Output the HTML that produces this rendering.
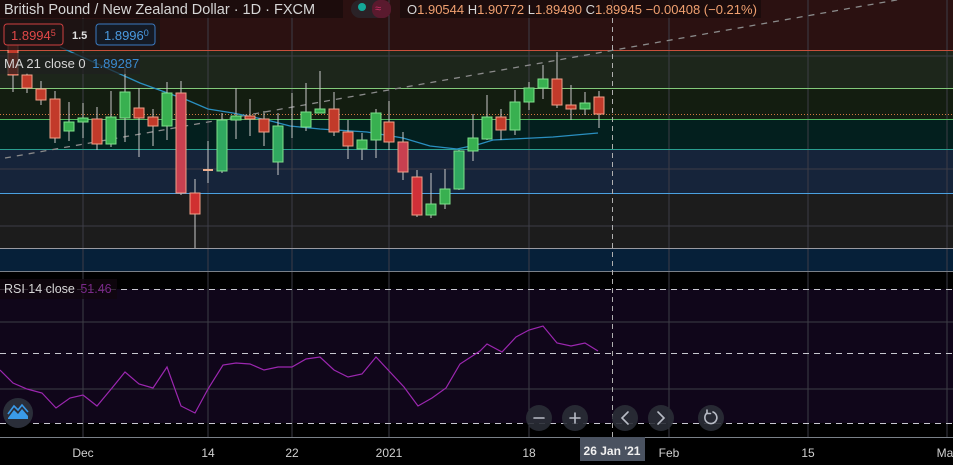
<!DOCTYPE html>
<html><head><meta charset="utf-8"><style>
html,body{margin:0;padding:0;background:#000;overflow:hidden}
svg{display:block}
text{font-family:"Liberation Sans",sans-serif}
</style></head><body>
<svg width="953" height="465" viewBox="0 0 953 465" xmlns="http://www.w3.org/2000/svg">
<!-- bands -->
<rect x="0" y="0" width="953" height="50" fill="#2b1111"/>
<rect x="0" y="50" width="953" height="38" fill="#1d261b"/>
<rect x="0" y="88" width="953" height="31" fill="#131d10"/>
<rect x="0" y="119" width="953" height="30" fill="#031f1e"/>
<rect x="0" y="149" width="953" height="44" fill="#16243a"/>
<rect x="0" y="193" width="953" height="55" fill="#1c1c1c"/>
<rect x="0" y="248" width="953" height="23" fill="#062039"/>
<rect x="0" y="271" width="953" height="166" fill="#000"/>
<rect x="0" y="289" width="953" height="134" fill="#10061a"/>
<rect x="0" y="437" width="953" height="28" fill="#000"/>
<!-- grid -->
<g stroke="#3d3d46" stroke-width="1">
<line x1="83" y1="0" x2="83" y2="437"/><line x1="208" y1="0" x2="208" y2="437"/><line x1="292" y1="0" x2="292" y2="437"/><line x1="389" y1="0" x2="389" y2="437"/><line x1="529" y1="0" x2="529" y2="437"/><line x1="669" y1="0" x2="669" y2="437"/><line x1="808" y1="0" x2="808" y2="437"/><line x1="947" y1="0" x2="947" y2="437"/>
<line x1="0" y1="56" x2="953" y2="56"/><line x1="0" y1="169" x2="953" y2="169"/><line x1="0" y1="226" x2="953" y2="226"/>
<line x1="0" y1="322" x2="953" y2="322"/><line x1="0" y1="389" x2="953" y2="389"/>
</g>
<line x1="0" y1="50.5" x2="953" y2="50.5" stroke="#c8503c"/>
<line x1="0" y1="88.5" x2="953" y2="88.5" stroke="#82c97a"/>
<line x1="0" y1="119.5" x2="953" y2="119.5" stroke="#4fb860"/>
<line x1="0" y1="149.5" x2="953" y2="149.5" stroke="#2a9d8f"/>
<line x1="0" y1="193.5" x2="953" y2="193.5" stroke="#4aa0e0"/>
<line x1="0" y1="248.5" x2="953" y2="248.5" stroke="#9a9aa0"/>
<line x1="0" y1="271.5" x2="953" y2="271.5" stroke="#7a8088"/>
<line x1="0" y1="437.5" x2="953" y2="437.5" stroke="#7a8088"/>
<line x1="0" y1="114.5" x2="953" y2="114.5" stroke="#d07a40" stroke-dasharray="1,2"/>
<g stroke="#c8c8d0" stroke-dasharray="6,5">
<line x1="0" y1="289.5" x2="953" y2="289.5"/><line x1="0" y1="353.5" x2="953" y2="353.5"/><line x1="0" y1="423.5" x2="953" y2="423.5"/>
</g>
<!-- trend -->
<line x1="5" y1="158" x2="953" y2="-10" stroke="#8a8a8a" stroke-width="1.3" stroke-dasharray="6,6"/>
<!-- crosshair -->
<line x1="612.5" y1="0" x2="612.5" y2="437" stroke="#b0b0b0" stroke-dasharray="5,4"/>
<!-- MA -->
<polyline fill="none" stroke="#2a8fc0" stroke-width="1.3" points="60,47 140,83 187,100 208,109 233,113 267,120 290,126 320,129 367,132 403,138 430,146 457,149 480,144 493,140 553,137 598,133"/>
<!-- candles -->
<g stroke="#c8c8c8" stroke-width="1">
<line x1="13" y1="42" x2="13" y2="92"/><line x1="27" y1="73" x2="27" y2="93"/><line x1="41" y1="81" x2="41" y2="105"/><line x1="55" y1="91" x2="55" y2="143"/><line x1="69" y1="102" x2="69" y2="141"/><line x1="83" y1="103" x2="83" y2="138"/><line x1="97" y1="107" x2="97" y2="150"/><line x1="111" y1="91" x2="111" y2="147"/><line x1="125" y1="68" x2="125" y2="142"/><line x1="139" y1="88" x2="139" y2="157"/><line x1="153" y1="109" x2="153" y2="146"/><line x1="167" y1="82" x2="167" y2="140"/><line x1="181" y1="81" x2="181" y2="195"/><line x1="195" y1="179" x2="195" y2="248"/><line x1="208" y1="141" x2="208" y2="183"/><line x1="222" y1="113" x2="222" y2="173"/><line x1="236" y1="88" x2="236" y2="139"/><line x1="250" y1="99" x2="250" y2="136"/><line x1="264" y1="111" x2="264" y2="146"/><line x1="278" y1="113" x2="278" y2="175"/><line x1="292" y1="93" x2="292" y2="138"/><line x1="306" y1="83" x2="306" y2="131"/><line x1="320" y1="71" x2="320" y2="113"/><line x1="334" y1="92" x2="334" y2="136"/><line x1="348" y1="120" x2="348" y2="159"/><line x1="362" y1="133" x2="362" y2="160"/><line x1="376" y1="109" x2="376" y2="158"/><line x1="389" y1="101" x2="389" y2="150"/><line x1="403" y1="132" x2="403" y2="180"/><line x1="417" y1="170" x2="417" y2="217"/><line x1="431" y1="173" x2="431" y2="218"/><line x1="445" y1="169" x2="445" y2="209"/><line x1="459" y1="150" x2="459" y2="190"/><line x1="473" y1="114" x2="473" y2="161"/><line x1="487" y1="95" x2="487" y2="140"/><line x1="501" y1="109" x2="501" y2="140"/><line x1="515" y1="90" x2="515" y2="135"/><line x1="529" y1="82" x2="529" y2="110"/><line x1="543" y1="65" x2="543" y2="99"/><line x1="557" y1="52" x2="557" y2="108"/><line x1="571" y1="85" x2="571" y2="120"/><line x1="585" y1="92" x2="585" y2="115"/><line x1="599" y1="91" x2="599" y2="128"/>
</g>
<g fill="#c23a2a" stroke="#f0a088" stroke-width="1">
<rect x="8" y="45" width="10" height="30"/><rect x="22" y="75" width="10" height="13"/><rect x="36" y="89" width="10" height="11"/><rect x="50" y="99" width="10" height="39"/><rect x="92" y="119" width="10" height="25"/><rect x="134" y="108" width="10" height="10"/><rect x="148" y="117" width="10" height="9"/><rect x="176" y="93" width="10" height="100" fill="#c84050"/><rect x="190" y="193" width="10" height="21" fill="#d03030"/><rect x="245" y="116" width="10" height="3"/><rect x="259" y="119" width="10" height="13"/><rect x="329" y="109" width="10" height="23"/><rect x="343" y="132" width="10" height="14"/><rect x="384" y="122" width="10" height="20"/><rect x="398" y="142" width="10" height="30" fill="#c84050"/><rect x="412" y="177" width="10" height="38" fill="#d03038"/><rect x="496" y="117" width="10" height="13"/><rect x="552" y="79" width="10" height="26"/><rect x="566" y="105" width="10" height="4"/><rect x="594" y="97" width="10" height="17"/>
</g>
<g fill="#38b050" stroke="#7ee08a" stroke-width="1">
<rect x="64" y="122" width="10" height="9"/><rect x="78" y="118" width="10" height="4"/><rect x="106" y="117" width="10" height="27"/><rect x="120" y="92" width="10" height="26"/><rect x="162" y="93" width="10" height="33"/><rect x="217" y="120" width="10" height="51" fill="#30a860"/><rect x="231" y="116" width="10" height="4"/><rect x="273" y="126" width="10" height="36" fill="#30a860"/><rect x="301" y="112" width="10" height="15"/><rect x="315" y="109" width="10" height="4"/><rect x="357" y="140" width="10" height="9"/><rect x="371" y="113" width="10" height="27"/><rect x="426" y="204" width="10" height="11"/><rect x="440" y="189" width="10" height="15"/><rect x="454" y="151" width="10" height="38" fill="#30a860"/><rect x="468" y="138" width="10" height="13"/><rect x="482" y="117" width="10" height="22"/><rect x="510" y="102" width="10" height="28"/><rect x="524" y="88" width="10" height="14"/><rect x="538" y="79" width="10" height="9"/><rect x="580" y="103" width="10" height="6"/>
</g>
<line x1="203" y1="170" x2="213" y2="170" stroke="#f0b090" stroke-width="2"/>
<!-- RSI -->
<polyline fill="none" stroke="#9c27b0" stroke-width="1.2" points="0,370 13,383 27,389 42,393 56,408 70,398 83,395 97,406 112,388 125,372 139,384 153,388 167,367 181,406 195,413 208,389 223,365 236,363 250,364 264,370 278,367 292,367 306,359 320,357 334,370 348,377 362,374 376,357 390,372 404,387 418,406 432,398 446,388 460,364 480,351 487,344 502,352 516,337 529,330 543,326 557,343 571,346 585,343 598,351"/>
<!-- header -->
<rect x="0" y="0" width="343" height="18" fill="#1a0c0c" opacity="0.85"/>
<text x="4" y="14" font-size="14.5" fill="#d6d6d6">British Pound / New Zealand Dollar · 1D · FXCM</text>
<rect x="351" y="0" width="40" height="18" rx="9" fill="#2a2227"/>
<rect x="372" y="0" width="19" height="18" rx="8" fill="#5a1a2e"/>
<circle cx="362" cy="7" r="4" fill="#14a89a"/>
<text x="375" y="12" font-size="11" fill="#d0306a">≈</text>
<rect x="400" y="0" width="361" height="18" fill="#1a0c0c" opacity="0.85"/>
<text x="407" y="14" font-size="13" fill="#d6d6d6">O<tspan fill="#f0a070">1.90544</tspan> H<tspan fill="#f0a070">1.90772</tspan> L<tspan fill="#f0a070">1.89490</tspan> C<tspan fill="#f0a070">1.89945</tspan> <tspan fill="#f0a070">−0.00408 (−0.21%)</tspan></text>
<rect x="0" y="19" width="160" height="31" fill="#1a1414" opacity="0.8"/>
<rect x="4" y="24" width="59" height="21" rx="3" fill="#1c1414" stroke="#d04040"/>
<text x="11" y="40" font-size="13" fill="#e04848">1.8994<tspan font-size="9" dy="-4">5</tspan></text>
<text x="72" y="39" font-size="11" fill="#e0e0e0" font-weight="bold">1.5</text>
<rect x="96" y="24" width="59" height="21" rx="3" fill="#141a24" stroke="#3a7ac0"/>
<text x="104" y="40" font-size="13" fill="#4a9ae0">1.8996<tspan font-size="9" dy="-4">0</tspan></text>
<rect x="0" y="53" width="140" height="21" fill="#202020" opacity="0.7"/>
<text x="4" y="68" font-size="13" fill="#d6d6d6">MA 21 close 0 <tspan fill="#3a8ad0" dx="3">1.89287</tspan></text>
<rect x="0" y="279" width="117" height="20" fill="#10060f" opacity="0.8"/>
<text x="4" y="293" font-size="12.5" fill="#d6d6d6">RSI 14 close <tspan fill="#7a2a8a" dx="2">51.46</tspan></text>
<!-- buttons -->
<g fill="#2a2d36" opacity="0.9">
<circle cx="539" cy="418" r="13"/><circle cx="575" cy="418" r="13"/><circle cx="625" cy="418" r="13"/><circle cx="661" cy="418" r="13"/><circle cx="711" cy="418" r="13"/>
</g>
<g stroke="#b8bcc6" stroke-width="1.6" fill="none" stroke-linecap="round">
<line x1="534" y1="418" x2="544" y2="418"/><line x1="570" y1="418" x2="580" y2="418"/><line x1="575" y1="413" x2="575" y2="423"/>
<polyline points="628,412 622,418 628,424"/><polyline points="658,412 664,418 658,424"/>
<path d="M707,413 A6,6 0 1 0 713,412"/><polyline points="707,410 707,413.5 710.5,413.5"/>
</g>
<circle cx="18" cy="413" r="15" fill="#2a2e39"/>
<path d="M8,418 L14,410 L18,414 L22,409 L28,416 L28,419 L8,419 Z" fill="#3a9ae8"/>
<path d="M8,414 L14,406 L18,410 L22,405 L28,412" fill="none" stroke="#3a9ae8" stroke-width="1.6"/>
<!-- axis -->
<g font-size="12" fill="#d0d0d0" text-anchor="middle">
<text x="83" y="457">Dec</text><text x="208" y="457">14</text><text x="292" y="457">22</text><text x="389" y="457">2021</text><text x="529" y="457">18</text><text x="669" y="457">Feb</text><text x="808" y="457">15</text><text x="947" y="457">Mar</text>
</g>
<rect x="580" y="437" width="65" height="24" fill="#4a5260"/>
<text x="612" y="455" font-size="12" fill="#f0f0f0" text-anchor="middle" font-weight="bold">26 Jan '21</text>
</svg>
</body></html>
